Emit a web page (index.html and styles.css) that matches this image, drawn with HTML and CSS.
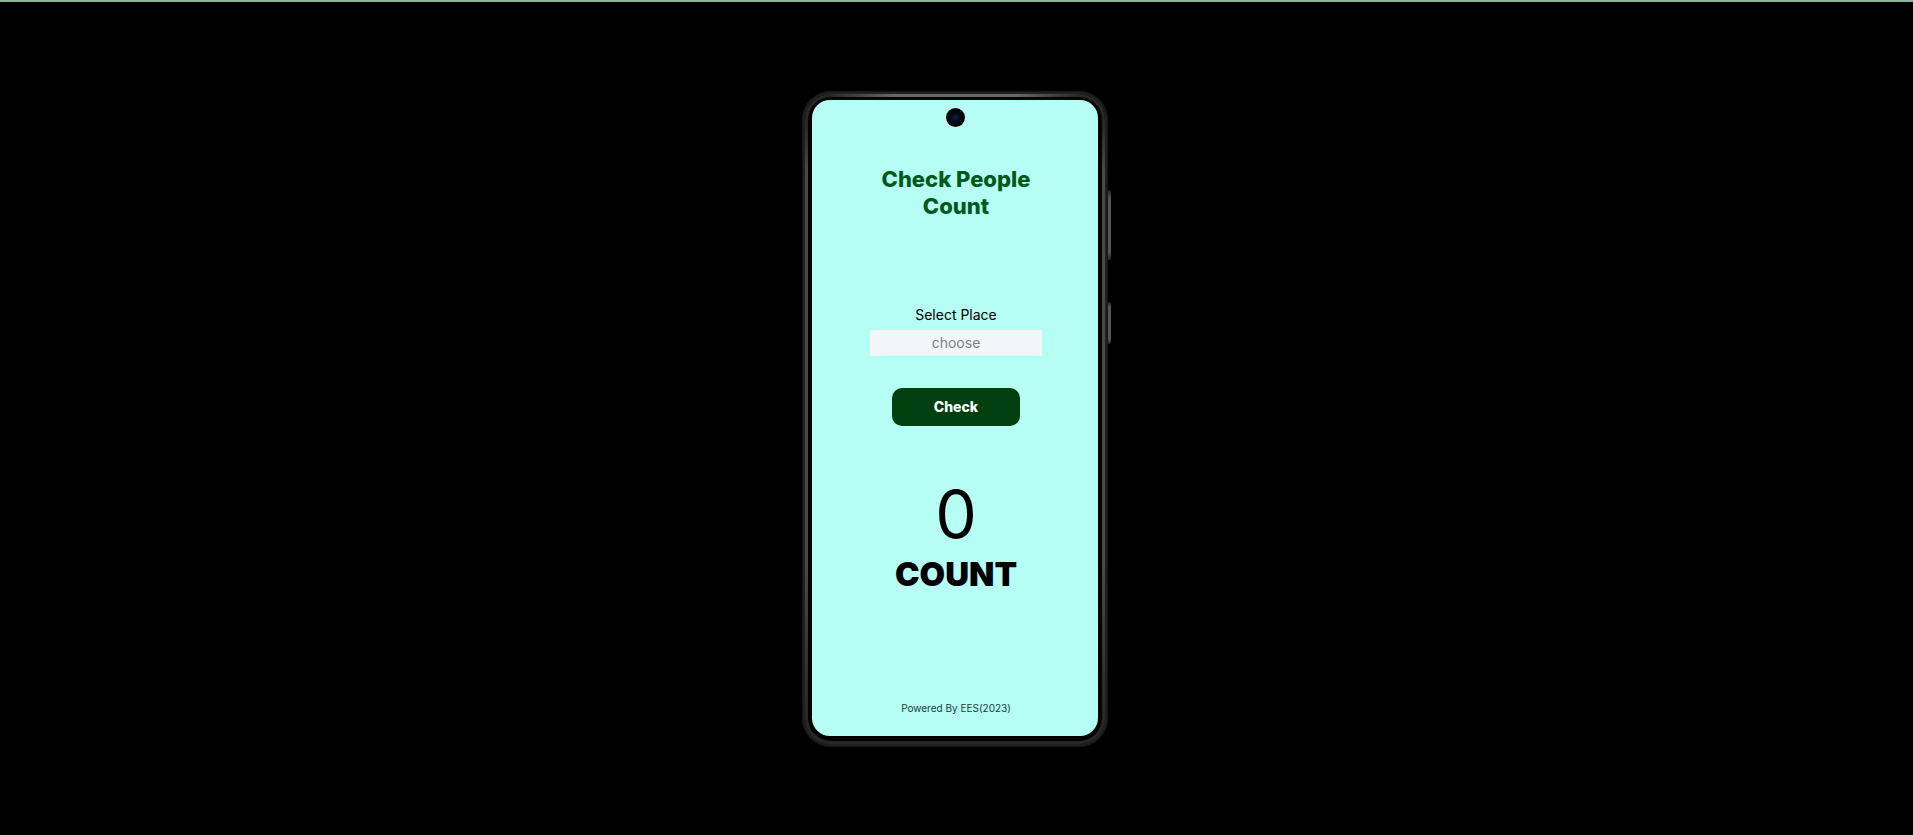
FILE: index.html
```html
<!DOCTYPE html>
<html lang="en">
<head>
<meta charset="utf-8">
<meta name="viewport" content="width=device-width, initial-scale=1">
<title>Check People Count</title>
<link rel="stylesheet" href="styles.css">
</head>
<body>
<div class="stage">
  <div class="device">
    <div class="frame">
      <div class="bezel">
        <main class="screen">
          <span class="camera"></span>
          <h1 class="title">Check People Count</h1>
          <form class="form">
            <label class="label" for="place">Select Place</label>
            <input class="field" id="place" type="text" placeholder="choose">
            <button class="button" type="button">Check</button>
          </form>
          <section class="result">
            <output class="number">0</output>
            <h2 class="caption">COUNT</h2>
          </section>
          <footer class="footer">Powered By EES(2023)</footer>
        </main>
      </div>
    </div>
    <div class="keys">
      <span class="key key-volume"></span>
      <span class="key key-power"></span>
    </div>
  </div>
</div>
</body>
</html>
```
FILE: styles.css
```css
* { box-sizing: border-box; }

body {
  margin: 0;
  background: #000;
  color: #000;
  font-family: Inter, "Liberation Sans", sans-serif;
}

.stage {
  display: flex;
  align-items: center;
  justify-content: center;
  min-height: 100vh;
  border-top: 2px solid #8fb39b;
}

.device { display: flex; }

.frame {
  padding: 3px;
  border-radius: 29px;
  background: #212121;
  box-shadow: inset 0 0 1px 1px #151515;
}

.bezel {
  position: relative;
  padding: 6px 7px 8px;
  border-radius: 26px;
  background: #000;
  box-shadow: inset 0 0 1px 3px #292929;
}

/* Metal highlights along the straight edges */
.bezel::before {
  content: "";
  position: absolute;
  inset: 0;
  border-radius: 26px;
  background:
    linear-gradient(90deg, transparent, #666 25%, #666 75%, transparent) 50% 0 / 250px 3px no-repeat,
    linear-gradient(transparent, #484848 8%, #484848 75%, transparent) 0 50% / 3px 590px no-repeat,
    linear-gradient(transparent, #484848 8%, #484848 75%, transparent) 100% 50% / 3px 590px no-repeat;
}

.screen {
  position: relative;
  display: flex;
  flex-direction: column;
  align-items: center;
  width: 286px;
  padding: 66px 56px 20px 58px;
  border-radius: 18px;
  background: #b6fdf3;
  text-align: center;
}

.camera {
  position: absolute;
  top: 8px;
  left: 50%;
  width: 19px;
  height: 19px;
  margin-left: -9px;
  border-radius: 50%;
  background: radial-gradient(circle, #0c2050 0, #070c1c 4px, #050507 6px);
}

.title {
  margin: 0;
  color: #00591c;
  font-size: 22px;
  font-weight: 800;
  line-height: 27px;
}

.form {
  display: flex;
  flex-direction: column;
  align-items: center;
  width: 100%;
  margin-top: 86px;
}

.label {
  font-size: 14px;
  line-height: 17px;
}

.field {
  width: 100%;
  height: 26px;
  margin-top: 7px;
  padding: 0;
  border: 0;
  background: #f3f5f8;
  color: #000;
  font: 400 14px/17px Inter, "Liberation Sans", sans-serif;
  text-align: center;
}

.field::placeholder { color: #808080; opacity: 1; }

.button {
  width: 128px;
  height: 38px;
  margin-top: 32px;
  padding: 0;
  border: 0;
  border-radius: 10px;
  background: #003f10;
  color: #fff;
  font: 800 14px/17px Inter, "Liberation Sans", sans-serif;
}

.result { margin-top: 48px; }

.number {
  display: block;
  font-size: 66px;
  font-weight: 400;
  line-height: 80px;
}

.caption {
  margin: 0;
  font-size: 33px;
  font-weight: 900;
  line-height: 40px;
}

.footer {
  margin-top: 106px;
  color: #173f3c;
  font-size: 10px;
  line-height: 16px;
}

.keys {
  display: flex;
  flex-direction: column;
  gap: 42px;
  padding-top: 99px;
}

.key {
  width: 3px;
  border-radius: 0 2px 2px 0;
  background: linear-gradient(#222, #555 12%, #555 88%, #222);
}

.key-volume { height: 70px; }
.key-power { height: 42px; }
```
